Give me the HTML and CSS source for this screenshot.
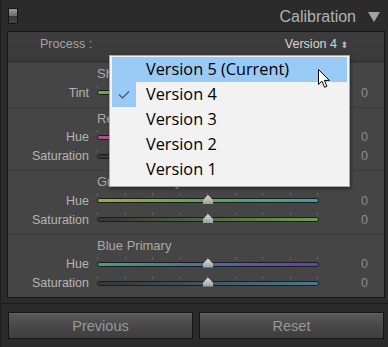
FILE: index.html
```html
<!DOCTYPE html>
<html lang="en">
<head>
  <meta charset="UTF-8">
  <title>Calibration</title>
  <link rel="stylesheet" href="styles.css">
</head>
<body>
  <div class="app">
    <div class="header">
      <span class="switch"></span>
      <span class="title">Calibration</span>
      <span class="collapse"></span>
    </div>

    <div class="panel">
      <div class="process">
        <span class="process-label">Process :</span>
        <span class="process-value">Version 4 <span class="updown">&#x2B0D;</span></span>
      </div>

      <div class="section">
        <div class="row"><span class="label"></span><span class="sec-title">Shadows</span></div>
        <div class="row">
          <span class="label">Tint</span>
          <div class="slider"><div class="track t-tint"></div><div class="thumb"></div></div>
          <span class="value">0</span>
        </div>
      </div>

      <div class="section">
        <div class="row"><span class="label"></span><span class="sec-title">Red Primary</span></div>
        <div class="row">
          <span class="label">Hue</span>
          <div class="slider"><div class="track t-red-hue"></div><div class="thumb"></div></div>
          <span class="value">0</span>
        </div>
        <div class="row">
          <span class="label">Saturation</span>
          <div class="slider"><div class="track t-red-sat"></div><div class="thumb"></div></div>
          <span class="value">0</span>
        </div>
      </div>

      <div class="section">
        <div class="row"><span class="label"></span><span class="sec-title">Green Primary</span></div>
        <div class="row">
          <span class="label">Hue</span>
          <div class="slider"><div class="track t-green-hue"></div><div class="thumb"></div></div>
          <span class="value">0</span>
        </div>
        <div class="row">
          <span class="label">Saturation</span>
          <div class="slider"><div class="track t-green-sat"></div><div class="thumb"></div></div>
          <span class="value">0</span>
        </div>
      </div>

      <div class="section">
        <div class="row"><span class="label"></span><span class="sec-title">Blue Primary</span></div>
        <div class="row">
          <span class="label">Hue</span>
          <div class="slider"><div class="track t-blue-hue"></div><div class="thumb"></div></div>
          <span class="value">0</span>
        </div>
        <div class="row">
          <span class="label">Saturation</span>
          <div class="slider"><div class="track t-blue-sat"></div><div class="thumb"></div></div>
          <span class="value">0</span>
        </div>
      </div>
    </div>

    <div class="footer">
      <button class="btn">Previous</button>
      <button class="btn">Reset</button>
    </div>

    <div class="menu">
      <div class="item hover"><span class="check"></span><span class="text">Version 5 (Current)</span></div>
      <div class="item selected">
        <span class="check">
          <svg width="12" height="9" viewBox="0 0 12 9"><path d="M1 4.5 L4.5 8 L11 1.5" fill="none" stroke="#4d6173" stroke-width="1.4"/></svg>
        </span>
        <span class="text">Version 4</span>
      </div>
      <div class="item"><span class="check"></span><span class="text">Version 3</span></div>
      <div class="item"><span class="check"></span><span class="text">Version 2</span></div>
      <div class="item"><span class="check"></span><span class="text">Version 1</span></div>
    </div>

    <svg class="cursor" width="13" height="20" viewBox="0 0 13 20">
      <path d="M0.5 0.5 L0.5 15.5 L4 12.2 L6.6 18.3 L8.9 17.3 L6.4 11.4 L11.3 11.4 Z" fill="#fff" stroke="#000" stroke-width="1" stroke-linejoin="round"/>
    </svg>
  </div>
</body>
</html>
```

FILE: styles.css
```css
body {
  margin: 0;
  background: #2b2b2b;
  font-family: "Liberation Sans", Arial, sans-serif;
}
.app {
  position: relative;
  width: 388px;
  height: 347px;
  overflow: hidden;
  background: #2b2b2b;
  border-left: 1px solid #1e1e1e;
  box-sizing: border-box;
}
.header {
  height: 31px;
  display: flex;
  align-items: center;
  padding: 0 8px 0 7px;
}
.switch {
  width: 8px;
  height: 14px;
  margin-top: 1px;
  border: 1px solid #151515;
  border-radius: 1px;
  background: linear-gradient(#9a9a9a 0, #6c6c6c 50%, #3a3a3a 50%, #444 100%);
}
.title {
  margin-left: auto;
  color: #b2b2b2;
  font-size: 16px;
  margin-top: 3px;
}
.collapse {
  width: 0;
  height: 0;
  margin-left: 12px;
  margin-top: 2px;
  border-left: 6px solid transparent;
  border-right: 6px solid transparent;
  border-top: 10px solid #a2a2a2;
}
.panel {
  margin: 0 3px 0 6px;
  border: 1px solid #171717;
  background: #454545;
}
.process {
  height: 30px;
  box-sizing: border-box;
  display: flex;
  align-items: center;
  justify-content: space-between;
  background: linear-gradient(#3d3d3d, #3a3a3a);
  padding: 0 36px 5px 32px;
  font-size: 12.5px;
  border-bottom: 1px solid #333;
}
.process-label {
  color: #a3a3a3;
}
.process-value {
  color: #d6d6d6;
}
.updown {
  font-size: 9px;
  color: #bbb;
  font-family: "DejaVu Sans", sans-serif;
}
.section {
  padding: 1px 0 4.5px;
  border-top: 1px solid #3a3a3a;
}
.section:first-of-type {
  border-top: none;
}
.row {
  height: 19px;
  display: flex;
  align-items: center;
}
.label {
  width: 81px;
  text-align: right;
  color: #b4b4b4;
  font-size: 12.5px;
  flex: none;
}
.sec-title {
  margin-left: 8px;
  color: #a9a9a9;
  font-size: 13px;
}
.slider {
  position: relative;
  width: 222px;
  height: 19px;
  margin-left: 8px;
  flex: none;
  background: repeating-linear-gradient(90deg, #626262 0 1px, transparent 1px 27.5px) 0 2px / 100% 3px no-repeat;
}
.track {
  position: absolute;
  left: 0;
  right: 0;
  top: 7px;
  height: 3px;
  border: 1px solid #1d1d1d;
  border-radius: 3px;
}
.t-tint { background: linear-gradient(90deg, #6aa84a, #7c8a6a 50%, #a04c9a); }
.t-red-hue { background: linear-gradient(90deg, #b0508e, #b4505a 50%, #b8743c); }
.t-red-sat { background: linear-gradient(90deg, #353535, #a04040); }
.t-green-hue { background: linear-gradient(90deg, #a5a742, #56a656 50%, #3e9ea6); }
.t-green-sat { background: linear-gradient(90deg, #353535, #6c9e4c); }
.t-blue-hue { background: linear-gradient(90deg, #3fa478, #4a6aa6 50%, #6540b2); }
.t-blue-sat { background: linear-gradient(90deg, #353535, #4c7890); }
.thumb {
  position: absolute;
  left: 106px;
  top: 4px;
  width: 10px;
  height: 9px;
  background: linear-gradient(#dcdcdc, #9c9c9c);
  clip-path: polygon(50% 0, 100% 55%, 100% 100%, 0 100%, 0 55%);
}
.value {
  margin-left: 42px;
  color: #8c8c8c;
  font-size: 12.5px;
}
.footer {
  margin-top: 5px;
  border-top: 1px solid #1b1b1b;
  padding: 8px 4px 0 7px;
  display: flex;
  gap: 6px;
}
.btn {
  flex: 1;
  height: 27px;
  border: 1px solid #151515;
  background: linear-gradient(#5a5a5a, #484848 50%, #3e3e3e);
  color: #989898;
  font-family: "Liberation Sans", Arial, sans-serif;
  font-size: 14.5px;
  padding: 0;
  box-shadow: inset 0 1px 0 #666;
}
.menu {
  position: absolute;
  left: 108px;
  top: 55px;
  width: 241px;
  height: 132px;
  box-sizing: border-box;
  padding: 1px 2px;
  background: #f2f2f2;
  border: 1px solid #a8a8a8;
  box-shadow: 1px 2px 3px rgba(0,0,0,0.4);
  font-family: "Open Sans", sans-serif;
  font-size: 16.3px;
  color: #000;
}
.item {
  height: 25px;
  display: flex;
  align-items: center;
}
.text {
  margin-top: -1px;
}
.check {
  width: 24px;
  height: 25px;
  margin-right: 10px;
  display: flex;
  align-items: center;
  justify-content: center;
  flex: none;
}
.item.hover {
  background: #99c9f5;
}
.item.selected .check {
  background: #99c9f5;
}
.cursor {
  position: absolute;
  left: 317px;
  top: 69px;
}
```
